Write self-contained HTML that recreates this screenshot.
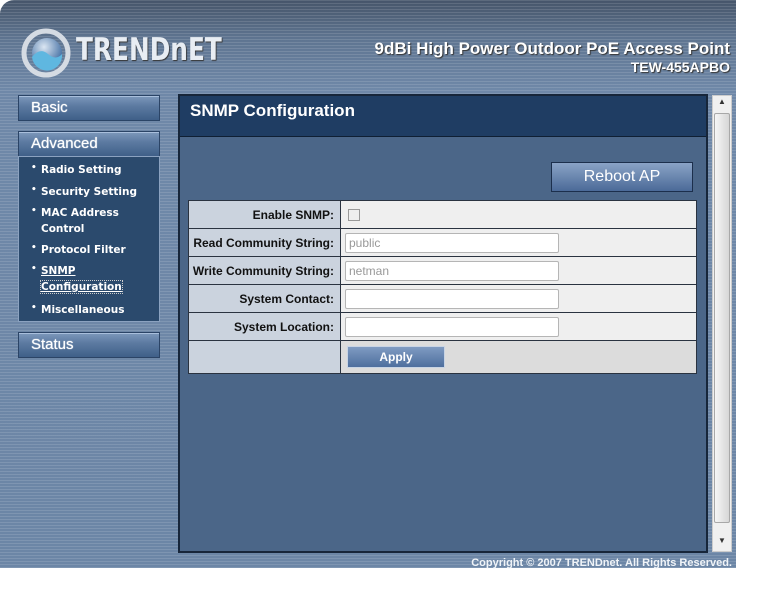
<!DOCTYPE html>
<html><head><meta charset="utf-8"><style>
*{margin:0;padding:0;box-sizing:border-box}
body{width:768px;height:614px;background:#fff;position:relative;overflow:hidden;font-family:"Liberation Sans",Arial,sans-serif}
.bg{position:absolute;left:0;top:0;width:736px;height:568px;border-top-left-radius:14px;
background:repeating-linear-gradient(180deg,rgba(255,255,255,.12) 0 1px,rgba(0,0,0,0) 1px 3px),linear-gradient(180deg,#46556a 0,#5f7591 40px,#6f88a8 90px,#6c86a6 100%)}
.abs{position:absolute}
.btn{position:absolute;left:18px;width:142px;height:26px;background:linear-gradient(180deg,#7d98bb 0,#5d7ba2 40%,#3f5f88 100%);border:1px solid #2b4466;box-shadow:inset 0 1px 0 #a9bfdc;color:#fff;font-size:15px;padding:3px 0 0 12px;text-shadow:0 0 1px #fff}
.sub{position:absolute;left:18px;top:156px;width:142px;height:166px;background:#2b4a6d;border:1px solid #8ba2c0}
.sub div{position:absolute;left:22px;color:#fff;font-weight:bold;font-size:10.5px;line-height:16px;font-family:"DejaVu Sans",sans-serif}
.sub div span{position:absolute;left:-10px;top:-2px;font-size:9px}
.panel{position:absolute;left:178px;top:94px;width:530px;height:459px;background:#4b6688;border:2px solid #17263a}
.hdr{position:absolute;left:0;top:0;width:526px;height:41px;background:#1f3d63;border-bottom:1px solid #0f1f33;color:#fff;font-weight:bold;font-size:17px;padding:5px 0 0 10px}
table{position:absolute;left:188px;top:200px;width:509px;border-collapse:collapse}
td{border:1px solid #2a3340;height:28px;font-size:12px}
td.l{background:#cbd3de;text-align:right;font-weight:bold;padding-right:6px;width:152px;color:#111}
td.v{background:#efefef;padding-left:4px}
.in{width:214px;height:20px;background:#fff;border:1px solid #b5b5b5;border-radius:2px;color:#999;font-size:12px;padding:2px 3px}
</style></head><body>
<div class="bg"></div>
<svg class="abs" style="left:20px;top:27px" width="52" height="52" viewBox="0 0 52 52">
<defs><radialGradient id="g" cx="0.4" cy="0.3" r="0.7"><stop offset="0" stop-color="#dbe6f2"/><stop offset="1" stop-color="#3d6aa0"/></radialGradient></defs>
<circle cx="26" cy="26" r="22" fill="none" stroke="#d5dbe3" stroke-width="5"/>
<circle cx="27" cy="26" r="15" fill="url(#g)"/>
<path d="M12 30 Q20 20 28 27 T42 27 A15 15 0 0 1 12 30Z" fill="#5fb7e0"/>
</svg>
<div class="abs" style="left:76px;top:32px;color:#e8edf3;font-size:31px;font-weight:bold;font-family:'DejaVu Sans',sans-serif;text-shadow:1px 1px 1px #333;transform:scaleX(0.8);transform-origin:0 0">TRENDnET</div>
<div class="abs" style="right:38px;top:39px;color:#fff;font-size:17px;font-weight:bold;text-shadow:1px 1px 1px #333">9dBi High Power Outdoor PoE Access Point</div>
<div class="abs" style="right:38px;top:59px;color:#fff;font-size:14px;font-weight:bold;text-shadow:1px 1px 1px #333">TEW-455APBO</div>

<div class="btn" style="top:95px">Basic</div>
<div class="btn" style="top:131px">Advanced</div>
<div class="sub">
<div style="top:5px"><span>•</span>Radio Setting</div>
<div style="top:27px"><span>•</span>Security Setting</div>
<div style="top:48px"><span>•</span>MAC Address<br>Control</div>
<div style="top:85px"><span>•</span>Protocol Filter</div>
<div style="top:106px;text-decoration:underline"><span>•</span>SNMP<br><u style="outline:1px dotted #ccc">Configuration</u></div>
<div style="top:145px"><span>•</span>Miscellaneous</div>
</div>
<div class="btn" style="top:332px">Status</div>

<div class="panel"><div class="hdr">SNMP Configuration</div>
<div class="abs" style="left:371px;top:66px;width:142px;height:30px;background:linear-gradient(180deg,#8aa3c6,#4b6a98);border:1px solid #1c2f4c;color:#fff;font-size:16px;text-align:center;line-height:28px">Reboot AP</div>
</div>
<div class="abs" style="left:712px;top:95px;width:20px;height:457px;background:#f0f0f0;border:1px solid #ccc"></div>
<div class="abs" style="left:714px;top:113px;width:16px;height:410px;background:linear-gradient(90deg,#f6f6f6,#d6d6d6);border:1px solid #a8a8a8;border-radius:2px"></div>
<div class="abs" style="left:718px;top:97px;font-size:8px;color:#333">▲</div>
<div class="abs" style="left:718px;top:536px;font-size:8px;color:#333">▼</div>

<table>
<tr><td class="l">Enable SNMP:</td><td class="v"><div style="width:12px;height:12px;border:1px solid #999;background:#eee;margin-left:3px"></div></td></tr>
<tr><td class="l">Read Community String:</td><td class="v"><div class="in">public</div></td></tr>
<tr><td class="l">Write Community String:</td><td class="v"><div class="in">netman</div></td></tr>
<tr><td class="l">System Contact:</td><td class="v"><div class="in"></div></td></tr>
<tr><td class="l">System Location:</td><td class="v"><div class="in"></div></td></tr>
<tr><td class="l" style="height:33px"></td><td class="v" style="background:#dcdcdc"><div style="width:98px;height:22px;margin-left:2px;background:linear-gradient(180deg,#7f9bc2,#4e6f9e);border:1px solid #c8d4e4;color:#fff;font-weight:bold;text-align:center;line-height:20px">Apply</div></td></tr>
</table>
<div class="abs" style="right:36px;top:557px;color:#f0f4f8;font-size:11px;font-weight:bold">Copyright © 2007 TRENDnet. All Rights Reserved.</div>
</body></html>
